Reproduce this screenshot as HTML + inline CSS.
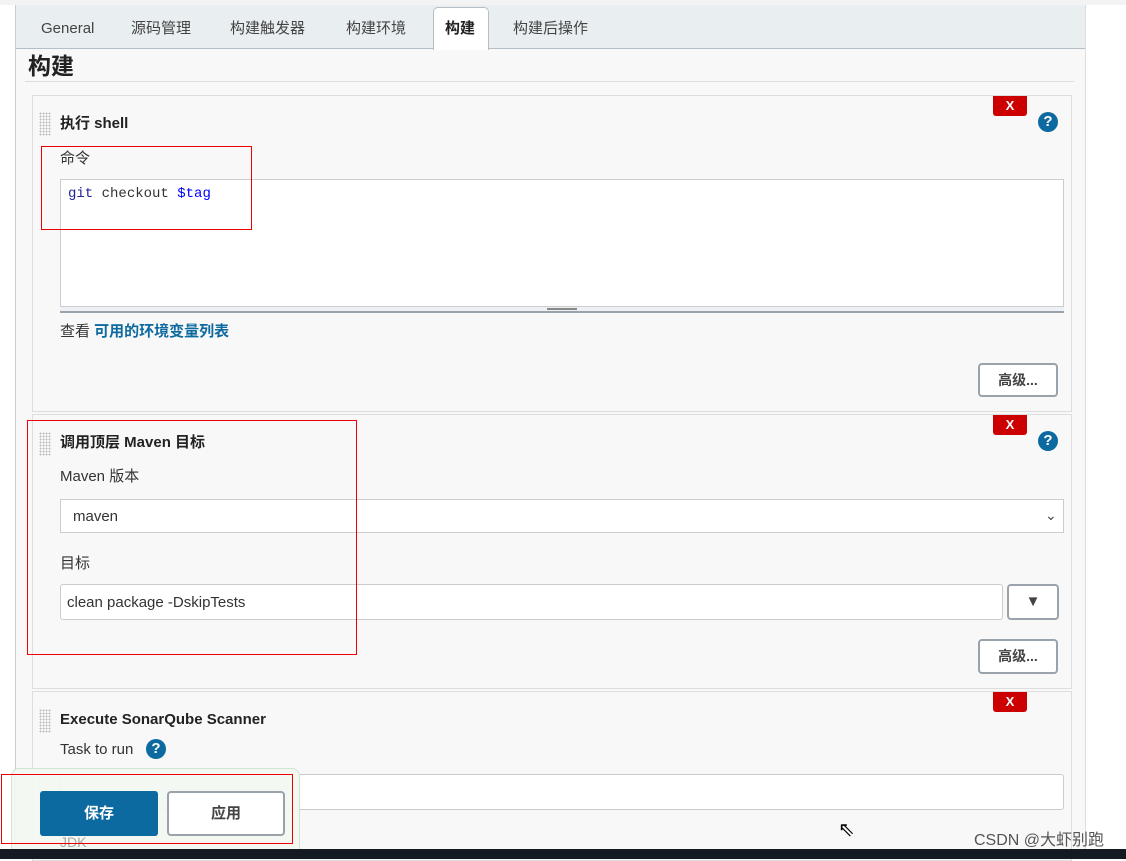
<!DOCTYPE html>
<html><head><meta charset="utf-8"><style>
*{margin:0;padding:0;box-sizing:border-box}
body{width:1126px;height:859px;position:relative;overflow:hidden;background:#fff;font-family:"Liberation Sans","Noto Sans CJK SC",sans-serif;color:#333;font-size:15px;line-height:20px}
.a{position:absolute}
.tab{position:absolute;top:19px;font-size:15px;color:#444;line-height:20px;height:20px}
.sec{position:absolute;left:32px;width:1040px;border:1px solid #ddd;background:#f8f8f8}
.grip{position:absolute;left:6px;width:12px;height:24px;background-image:radial-gradient(#bbb 0.8px,transparent 0.9px);background-size:3px 3px}
.x{position:absolute;width:34px;height:20px;background:#c00;border-radius:0 0 3px 3px;color:#fff;font-weight:bold;font-size:13px;text-align:center;line-height:20px}
.q{position:absolute;width:20px;height:20px;border-radius:50%;background:#0d6aa0;color:#fff;font-weight:bold;font-size:15px;text-align:center;line-height:20px}
.h{position:absolute;left:27px;font-weight:bold;font-size:15px;color:#222}
.in{position:absolute;background:#fff;border:1px solid #ccc;border-radius:3px}
.btn{position:absolute;border:2px solid #9aa3ab;border-radius:4px;background:#fff;font-size:14px;font-weight:bold;color:#444;text-align:center}
.red{position:absolute;border:1px solid #e00}
</style></head><body>
<div class="a" style="left:0;top:0;width:1126px;height:5px;background:#f3f3f3"></div>
<div class="a" style="left:15px;top:5px;width:1071px;height:845px;background:#f8f8f8;border-left:1px solid #ccc;border-right:1px solid #ddd"></div>
<div class="a" style="left:16px;top:5px;width:1069px;height:44px;background:#e9eef1;border-bottom:1px solid #b5bec5"></div>
<div class="tab" style="left:41px">General</div>
<div class="tab" style="left:131px">源码管理</div>
<div class="tab" style="left:230px">构建触发器</div>
<div class="tab" style="left:346px">构建环境</div>
<div class="a" style="left:433px;top:7px;width:56px;height:43px;background:#fff;border:1px solid #b5bec5;border-bottom:none;border-radius:5px 5px 0 0"></div>
<div class="tab" style="left:445px;font-weight:bold;color:#222">构建</div>
<div class="tab" style="left:513px">构建后操作</div>
<div class="a" style="left:28px;top:53px;font-size:23px;line-height:26px;font-weight:bold;color:#222">构建</div>
<div class="a" style="left:25px;top:81px;width:1049px;height:1px;background:#ddd"></div>

<div class="sec" style="top:95px;height:317px">
 <div class="grip" style="top:16px"></div>
 <div class="h" style="top:18px">执行 shell</div>
 <div class="x" style="left:960px;top:0">X</div>
 <div class="q" style="left:1005px;top:16px">?</div>
 <div class="a" style="left:27px;top:53px">命令</div>
 <div class="a" style="left:27px;top:83px;width:1004px;height:134px;background:#fff;border:1px solid #ccc;border-bottom:none"></div>
 <div class="a" style="left:27px;top:210px;width:1004px;height:7px;background:#eef1f3;border-top:1px solid #ccc;border-bottom:2px solid #9aa3ab"></div>
 <div class="a" style="left:514px;top:212px;width:30px;height:2px;border-top:1px solid #888;border-bottom:1px solid #888"></div>
 <div class="a" style="left:35px;top:88px;font-family:'Liberation Mono',monospace;font-size:14px;color:#333"><span style="color:#229">git</span> checkout <span style="color:#00f">$tag</span></div>
 <div class="a" style="left:27px;top:226px">查看 <b style="color:#0d6aa0">可用的环境变量列表</b></div>
 <div class="btn" style="left:945px;top:267px;width:80px;height:34px;line-height:30px">高级...</div>
</div>

<div class="sec" style="top:414px;height:275px">
 <div class="grip" style="top:17px"></div>
 <div class="h" style="top:18px">调用顶层 Maven 目标</div>
 <div class="x" style="left:960px;top:0">X</div>
 <div class="q" style="left:1005px;top:16px">?</div>
 <div class="a" style="left:27px;top:52px">Maven 版本</div>
 <div class="in" style="left:27px;top:84px;width:1004px;height:34px;border-radius:0"></div>
 <div class="a" style="left:40px;top:92px">maven</div>
 <div class="a" style="left:1012px;top:90px;font-size:14px;color:#444">⌄</div>
 <div class="a" style="left:27px;top:139px">目标</div>
 <div class="in" style="left:27px;top:169px;width:943px;height:36px"></div>
 <div class="a" style="left:34px;top:178px">clean package -DskipTests</div>
 <div class="btn" style="left:974px;top:169px;width:52px;height:36px;line-height:32px;font-size:15px">▼</div>
 <div class="btn" style="left:945px;top:224px;width:80px;height:35px;line-height:31px">高级...</div>
</div>

<div class="sec" style="top:691px;height:170px">
 <div class="grip" style="top:17px"></div>
 <div class="h" style="top:18px">Execute SonarQube Scanner</div>
 <div class="x" style="left:960px;top:0">X</div>
 <div class="a" style="left:27px;top:48px">Task to run</div>
 <div class="q" style="left:113px;top:47px">?</div>
 <div class="in" style="left:27px;top:82px;width:1004px;height:36px"></div>
</div>

<div class="a" style="left:11px;top:768px;width:289px;height:90px;background:#f4f8f2;border:1px solid #cde3cf;border-radius:8px 8px 0 0;opacity:.95"></div>
<div class="a" style="left:40px;top:791px;width:118px;height:45px;background:#0d6aa0;border-radius:3px;color:#fff;font-weight:bold;text-align:center;line-height:45px">保存</div>
<div class="btn" style="left:167px;top:791px;width:118px;height:45px;line-height:41px;font-size:15px">应用</div>
<div class="a" style="left:60px;top:832px;color:#aaa;font-size:14px">JDK</div>

<div class="red" style="left:41px;top:146px;width:211px;height:84px"></div>
<div class="red" style="left:27px;top:420px;width:330px;height:235px"></div>
<div class="red" style="left:1px;top:774px;width:292px;height:70px"></div>

<div class="a" style="left:838px;top:820px;font-size:20px;color:#000">⇖</div>
<div class="a" style="left:974px;top:831px;font-size:16px;color:#555">CSDN @大虾别跑</div>
<div class="a" style="left:0;top:849px;width:1126px;height:10px;background:#141a22"></div>
</body></html>
